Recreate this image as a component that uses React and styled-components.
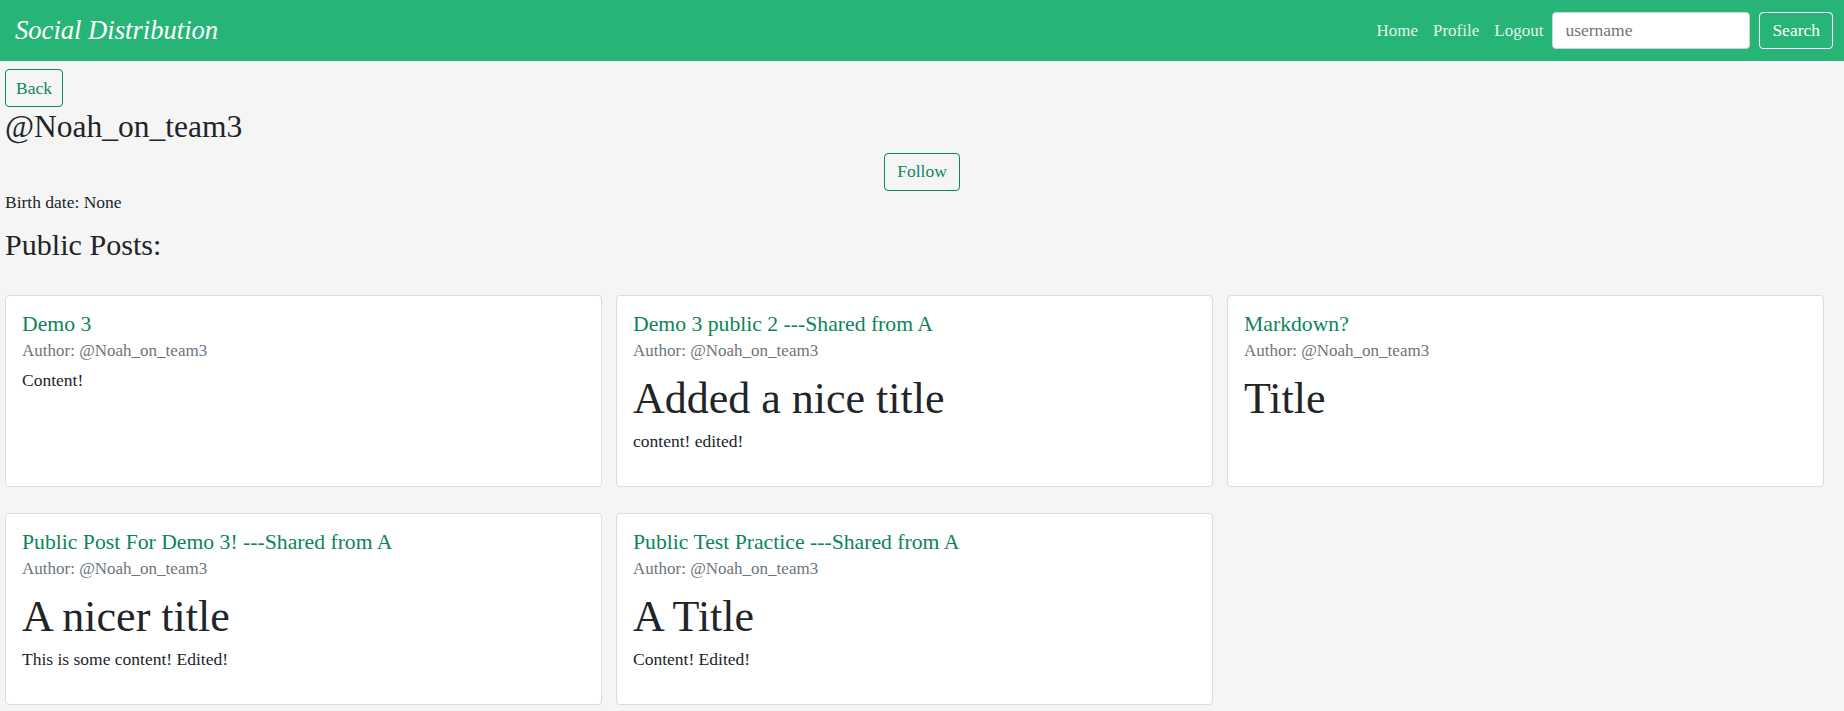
import React from 'react';
import styled, { createGlobalStyle } from 'styled-components';

const GlobalStyle = createGlobalStyle`
    body {
        margin: 0;
        background-color: #f5f5f5;
        color: #212529;
        font-family: "Liberation Serif", "Times New Roman", serif;
        font-size: 17.5px;
        line-height: 1.5;
    }
`;

const Navbar = styled.nav`
    display: flex;
    align-items: center;
    justify-content: space-between;
    height: 61px;
    padding: 0 11px 0 15px;
    background-color: #27b577;
`;

const Brand = styled.a`
    color: #ffffff;
    font-size: 26.6px;
    font-style: italic;
    text-decoration: none;
`;

const NavRight = styled.div`
    display: flex;
    align-items: center;
`;

const NavLink = styled.a`
    color: rgba(255, 255, 255, 0.88);
    font-size: 17px;
    margin-right: 15px;
    text-decoration: none;
    &:last-of-type {
        margin-right: 9px;
    }
`;

const SearchInput = styled.input`
    box-sizing: border-box;
    width: 198px;
    height: 37px;
    padding: 0 12px;
    border: 1px solid #ced4da;
    border-radius: 4px;
    background: #ffffff;
    font-family: inherit;
    font-size: 17.5px;
    color: #212529;
    &::placeholder {
        color: #6c757d;
    }
`;

const SearchButton = styled.button`
    box-sizing: border-box;
    height: 37px;
    margin-left: 9px;
    padding: 0 12px;
    border: 1px solid #ffffff;
    border-radius: 4px;
    background: transparent;
    color: #ffffff;
    font-family: inherit;
    font-size: 17.5px;
`;

const Page = styled.main`
    padding: 8px 5px 0 5px;
`;

const OutlineButton = styled.button`
    box-sizing: border-box;
    height: 38px;
    padding: 0 ${(p) => (p.$narrow ? '10px' : '12px')};
    border: 1px solid #0d875a;
    border-radius: 4px;
    background: transparent;
    color: #0d875a;
    font-family: inherit;
    font-size: 17.5px;
`;

const Handle = styled.h3`
    margin: 1px 0 0 0;
    font-size: 31.5px;
    font-weight: 400;
    line-height: 1.2;
`;

const FollowRow = styled.div`
    display: flex;
    justify-content: center;
    margin-top: 7px;
`;

const Birth = styled.p`
    margin: 0;
    line-height: 1.3;
`;

const SectionTitle = styled.h4`
    margin: 13.5px 0 0 0;
    font-size: 30.1px;
    font-weight: 400;
    line-height: 1.2;
`;

const PostGrid = styled.div`
    display: grid;
    grid-template-columns: repeat(3, 597px);
    column-gap: 14px;
    row-gap: 26px;
    margin-top: 32px;
`;

const Card = styled.div`
    box-sizing: border-box;
    height: 192px;
    padding: 14.5px 16px 16px 16px;
    background: #ffffff;
    border: 1px solid #dcdcdc;
    border-radius: 4px;
`;

const CardTitle = styled.a`
    display: block;
    color: #0b8558;
    font-size: 21.7px;
    line-height: 1.2;
    text-decoration: none;
`;

const Author = styled.div`
    color: #6c757d;
    font-size: 17px;
    line-height: 1.2;
    margin-top: 4px;
`;

const Body = styled.div`
    margin-top: 5.5px;
`;

const BigTitle = styled.h1`
    margin: 11.5px 0 3px 0;
    font-size: 44px;
    font-weight: 400;
    line-height: 1.2;
`;

const Text = styled.p`
    margin: 0;
`;

const posts = [
    { title: 'Demo 3', text: 'Content!' },
    { title: 'Demo 3 public 2 ---Shared from A', heading: 'Added a nice title', text: 'content! edited!' },
    { title: 'Markdown?', heading: 'Title' },
    { title: 'Public Post For Demo 3! ---Shared from A', heading: 'A nicer title', text: 'This is some content! Edited!' },
    { title: 'Public Test Practice ---Shared from A', heading: 'A Title', text: 'Content! Edited!' },
];

export default function App() {
    return (
        <>
            <GlobalStyle />
            <Navbar>
                <Brand href="#">Social Distribution</Brand>
                <NavRight>
                    <NavLink href="#">Home</NavLink>
                    <NavLink href="#">Profile</NavLink>
                    <NavLink href="#">Logout</NavLink>
                    <SearchInput placeholder="username" />
                    <SearchButton>Search</SearchButton>
                </NavRight>
            </Navbar>
            <Page>
                <OutlineButton $narrow>Back</OutlineButton>
                <Handle>@Noah_on_team3</Handle>
                <FollowRow>
                    <OutlineButton>Follow</OutlineButton>
                </FollowRow>
                <Birth>Birth date: None</Birth>
                <SectionTitle>Public Posts:</SectionTitle>
                <PostGrid>
                    {posts.map((post, i) => (
                        <Card key={i}>
                            <CardTitle href="#">{post.title}</CardTitle>
                            <Author>Author: @Noah_on_team3</Author>
                            <Body>
                                {post.heading && <BigTitle>{post.heading}</BigTitle>}
                                {post.text && <Text>{post.text}</Text>}
                            </Body>
                        </Card>
                    ))}
                </PostGrid>
            </Page>
        </>
    );
}
